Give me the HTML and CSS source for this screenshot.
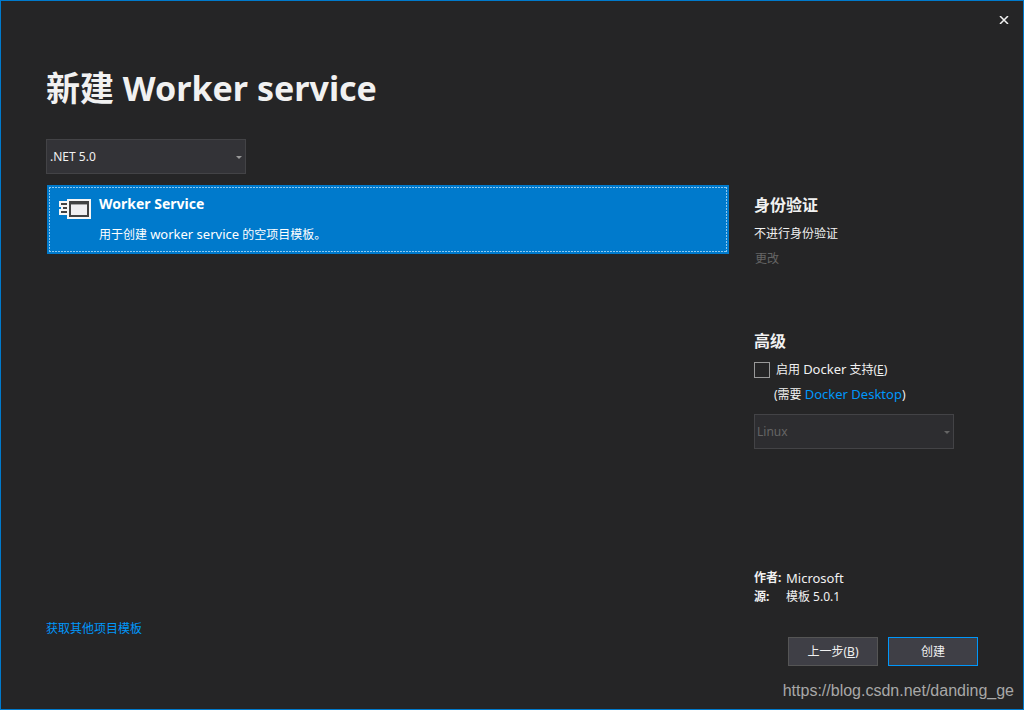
FILE: index.html
```html
<!DOCTYPE html>
<html lang="zh-CN">
<head>
<meta charset="utf-8">
<meta name="viewport" content="width=device-width, initial-scale=1">
<title>新建 Worker service</title>
<link rel="stylesheet" href="styles.css">
</head>
<body>
<div class="window">
  <header class="titlebar">
    <button class="close" type="button" aria-label="关闭">
      <svg width="10" height="8" viewBox="0 0 10 8"><path d="M1 0 9 8M9 0 1 8" stroke="#f1f1f1" stroke-width="1.5"/></svg>
    </button>
  </header>
  <h1 class="title">新建 Worker service</h1>
  <div class="combo framework">
    <select class="combo-select" aria-label="目标框架"><option>.NET 5.0</option></select>
    <svg class="combo-arrow" width="6" height="3" viewBox="0 0 6 3"><path d="M0 0h6L3 3z" fill="currentColor"/></svg>
  </div>
  <div class="content">
    <main class="templates">
      <button class="template" type="button">
        <svg class="template-icon" width="32" height="20" viewBox="0 0 32 20" shape-rendering="crispEdges">
          <path d="M8 0h24v20H8v-4H0v-6h2V8H0V2h8z" fill="#f6f6f6"/>
          <path d="M10 2h20v16H10zM2 4h6v2H2zM4 8h4v2H4zM2 12h6v2H2z" fill="#424242"/>
          <path d="M12 6h16v10H12z" fill="#f0eff1"/>
          <path d="M12 5h16v1H12z" fill="#a5a5a6"/>
        </svg>
        <span class="template-text">
          <span class="template-name">Worker Service</span>
          <span class="template-description">用于创建 <span class="latin">worker service</span> 的空项目模板。</span>
        </span>
      </button>
      <a class="link more" href="#">获取其他项目模板</a>
    </main>
    <aside class="options">
      <section class="auth">
        <h2 class="heading">身份验证</h2>
        <p class="auth-value">不进行身份验证</p>
        <button class="change" type="button" disabled>更改</button>
      </section>
      <section class="advanced">
        <h2 class="heading">高级</h2>
        <div class="docker">
          <input class="check" type="checkbox" id="docker" accesskey="e">
          <label for="docker">启用 <span class="latin">Docker</span> 支持(<u>E</u>)</label>
        </div>
        <p class="requirement">(需要 <a class="link latin" href="#">Docker Desktop</a>)</p>
        <div class="combo disabled">
          <select class="combo-select" aria-label="操作系统" disabled><option>Linux</option></select>
          <svg class="combo-arrow" width="6" height="3" viewBox="0 0 6 3"><path d="M0 0h6L3 3z" fill="currentColor"/></svg>
        </div>
      </section>
      <dl class="about">
        <dt>作者:</dt><dd class="latin">Microsoft</dd>
        <dt>源:</dt><dd>模板 5.0.1</dd>
      </dl>
    </aside>
  </div>
  <footer class="actions">
    <button class="button" type="button" accesskey="b">上一步(<u>B</u>)</button>
    <button class="button primary" type="button">创建</button>
  </footer>
  <div class="watermark">https://blog.csdn.net/danding_ge</div>
</div>
</body>
</html>
```
FILE: styles.css
```css
* { box-sizing: border-box; }

body {
  margin: 0;
  background: #252526;
  color: #f1f1f1;
  font: 12px/16px "Noto Sans", "Noto Sans CJK SC", sans-serif;
}

h1, h2, p, dl, dd { margin: 0; }

button, select { font: inherit; color: inherit; }

.window {
  display: flex;
  flex-direction: column;
  min-height: 100vh;
  border: 1px solid #007acc;
}

.latin { font-size: 13px; }

.link { color: #0097fb; text-decoration: none; }

.titlebar {
  display: flex;
  justify-content: flex-end;
  padding: 8px 8px 0 0;
}

.close {
  display: flex;
  align-items: center;
  justify-content: center;
  width: 22px;
  height: 22px;
  padding: 0;
  border: 0;
  background: none;
}

.title {
  margin: 33px 45px 0;
  font-size: 34px;
  line-height: 48px;
}

.combo {
  display: grid;
  align-items: center;
  width: 200px;
  color: #999;
}

.combo > * { grid-area: 1 / 1; }

.combo-select {
  appearance: none;
  width: 100%;
  height: 35px;
  padding: 0 16px 0 3px;
  border: 1px solid #434346;
  border-radius: 0;
  background: #333337;
  color: #f1f1f1;
}

.combo-arrow {
  justify-self: end;
  margin: 2px 4px 0 0;
  pointer-events: none;
}

.disabled .combo-select {
  padding-left: 2px;
  background: #2d2d30;
  color: #656565;
  opacity: 1;
}

.disabled { color: #656565; }

.framework { margin: 27px 45px 0; }

.content {
  flex: 1;
  display: grid;
  grid-template-columns: 1fr 224px;
  gap: 25px;
  padding: 11px 45px 0 46px;
}

.templates {
  display: flex;
  flex-direction: column;
  align-items: flex-start;
  justify-content: space-between;
}

.template {
  --dash: #8cc8f0 0 2px, transparent 2px 3px;
  display: flex;
  align-items: flex-start;
  gap: 8px;
  width: 100%;
  height: 69px;
  padding: 7px 10px;
  border: 2px solid #007acc;
  background:
    repeating-linear-gradient(90deg, var(--dash)) top / 100% 1px no-repeat,
    repeating-linear-gradient(90deg, var(--dash)) bottom / 100% 1px no-repeat,
    repeating-linear-gradient(var(--dash)) left / 1px 100% no-repeat,
    repeating-linear-gradient(var(--dash)) right / 1px 100% no-repeat,
    #007acc;
  color: #fff;
  text-align: left;
}

.template-icon { margin-top: 5px; }

.template-text {
  display: flex;
  flex-direction: column;
  gap: 12px;
}

.template-name {
  font-size: 14px;
  line-height: 20px;
  font-weight: 700;
}

.more { margin-left: -1px; }

.options {
  display: flex;
  flex-direction: column;
}

.heading {
  font-size: 16px;
  line-height: 24px;
}

.auth { padding-top: 8px; }

.auth-value { margin-top: 9px; }

.change {
  display: block;
  margin-top: 9px;
  padding: 0 1px;
  border: 0;
  background: none;
  color: #656565;
}

.advanced { margin-top: 62px; }

.docker {
  display: flex;
  align-items: center;
  gap: 6px;
  margin-top: 8px;
}

.check {
  appearance: none;
  width: 16px;
  height: 16px;
  margin: 0;
  border: 1px solid #999;
  background: #252526;
}

.check:checked { background: #007acc; }

.requirement {
  margin: 8px 0 11px 20px;
}

.about {
  display: grid;
  grid-template-columns: 32px 1fr;
  row-gap: 3px;
  margin: auto 0 32px;
}

.about dt { font-weight: 700; }

.actions {
  display: flex;
  justify-content: flex-end;
  gap: 10px;
  padding: 0 45px;
}

.button {
  min-width: 90px;
  height: 29px;
  border: 1px solid #555;
  background: #3f3f46;
}

.primary { border-color: #0097fb; }

.watermark {
  margin: 13px 9px 6px;
  color: #a8a8a8;
  font: 16px/24px "Liberation Sans", sans-serif;
  text-align: right;
}
```
